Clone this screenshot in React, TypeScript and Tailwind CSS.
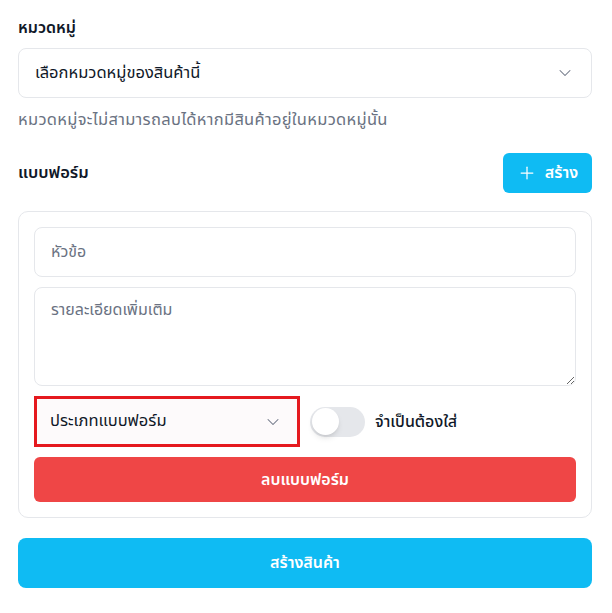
import { ChevronDown, Plus } from "lucide-react";

const font = { fontFamily: '"Noto Sans Thai", "Noto Sans", "Liberation Sans", sans-serif' };

function Chevron() {
  return <ChevronDown className="h-5 w-5 text-gray-500" strokeWidth={1.25} />;
}

export default function App() {
  return (
    <div style={font} className="min-h-[613px] w-[612px] bg-white pl-[18px] pr-5 text-base text-gray-900">
      <div className="pt-[16px]">
        <div className="mb-[8px] font-semibold leading-6">หมวดหมู่</div>
        <div className="flex h-[50px] items-center justify-between rounded-lg border border-gray-200 pl-4 pr-4">
          <span className="text-[16.5px]">เลือกหมวดหมู่ของสินค้านี้</span>
          <Chevron />
        </div>
        <p className="mt-[10px] text-[16.5px] leading-6 tracking-[0.3px] text-gray-500">
          หมวดหมู่จะไม่สามารถลบได้หากมีสินค้าอยู่ในหมวดหมู่นั้น
        </p>
      </div>

      <div className="mt-[21px] flex items-center justify-between">
        <span className="text-[16.5px] font-semibold">แบบฟอร์ม</span>
        <button
          type="button"
          className="flex h-10 w-[89px] items-center justify-center gap-2 rounded-md bg-[#0fbbf3] text-white"
        >
          <Plus className="h-5 w-5" strokeWidth={1.5} />
          <span className="font-semibold">สร้าง</span>
        </button>
      </div>

      <div className="mt-[18px] flex flex-col gap-[10px] rounded-[10px] border border-gray-200 p-[15px]">
        <input
          placeholder="หัวข้อ"
          className="h-[50px] rounded-lg border border-gray-200 px-4 placeholder:text-gray-500 focus:outline-none"
        />
        <textarea
          placeholder="รายละเอียดเพิ่มเติม"
          className="h-[99px] rounded-lg border border-gray-200 px-4 py-[10px] placeholder:text-gray-500 focus:outline-none"
        />
        <div className="flex items-center gap-[10px]">
          <div className="flex h-[51px] w-[266px] items-center justify-between border-[3px] border-[#e5191e] bg-[#fdfafb] pl-[13px] pr-[14px]">
            <span className="text-[16.5px]">ประเภทแบบฟอร์ม</span>
            <Chevron />
          </div>
          <div className="flex h-[30px] w-[55px] items-center rounded-full bg-gray-200 p-[2px]">
            <span className="h-[27px] w-[27px] rounded-full bg-white shadow-md" />
          </div>
          <span className="font-medium">จำเป็นต้องใส่</span>
        </div>
        <button
          type="button"
          className="h-[45px] rounded-md bg-[#ef4646] font-semibold text-white"
        >
          ลบแบบฟอร์ม
        </button>
      </div>

      <button
        type="button"
        className="mt-[20px] h-[50px] w-full rounded-lg bg-[#0fbbf3] font-semibold text-white"
      >
        สร้างสินค้า
      </button>
    </div>
  );
}
